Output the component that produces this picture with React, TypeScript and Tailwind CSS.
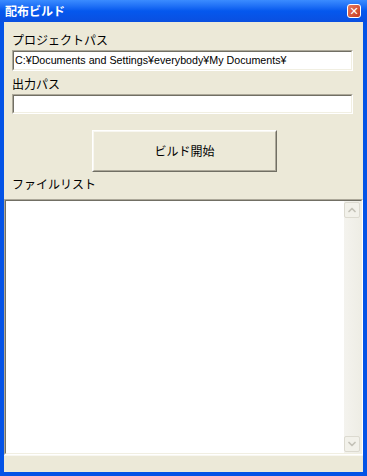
import { ChevronDown, ChevronUp } from 'lucide-react';

const jp = "font-['MS_UI_Gothic','Noto_Sans_CJK_JP',sans-serif]";

function Sunken({ children, className = '' }: { children?: React.ReactNode; className?: string }) {
  return (
    <div className={`border border-t-[#aca899] border-l-[#aca899] border-b-white border-r-white ${className}`}>
      <div className="h-full border border-t-[#716f64] border-l-[#716f64] border-b-[#f1efe2] border-r-[#f1efe2] bg-white">
        {children}
      </div>
    </div>
  );
}

function ScrollArrow({ down }: { down?: boolean }) {
  return (
    <div className="flex h-[16px] w-[16px] items-center justify-center rounded-[2px] border border-[#dcdad0] bg-[#f2f1ea]">
      {down ? (
        <ChevronDown className="h-3 w-3 text-[#c4c2b8]" strokeWidth={3.5} />
      ) : (
        <ChevronUp className="h-3 w-3 text-[#c4c2b8]" strokeWidth={3.5} />
      )}
    </div>
  );
}

export default function App() {
  return (
    <div className="flex h-[476px] w-[367px] flex-col bg-[#0453e6]">
      {/* title bar */}
      <div className="flex h-[22px] items-center justify-between bg-gradient-to-b from-[#3b8cff] via-[#0558ee] to-[#0a4fe0] pl-[5px] pr-[6px]">
        <span className={`${jp} text-[12px] font-bold leading-none text-white`}>配布ビルド</span>
        <div className="flex h-[14px] w-[14px] items-center justify-center rounded-[3px] border border-white bg-gradient-to-br from-[#e8795c] to-[#c4381f]">
          <span className="font-['DejaVu_Sans',sans-serif] text-[11px] font-bold leading-none text-white">✕</span>
        </div>
      </div>

      {/* client */}
      <div className="mb-[4px] ml-[4px] mr-[4px] flex flex-1 flex-col bg-[#ece9d8]">
        <div className="pl-[8px] pr-[10px] pt-[10px]">
          <div className={`${jp} h-[16px] text-[12px] leading-[16px] text-black`}>プロジェクトパス</div>
          <Sunken className="mt-[2px] h-[21px] w-[341px]">
            <div className="pl-[1px] font-['Liberation_Sans','Noto_Sans_CJK_JP',sans-serif] text-[10.7px] leading-[16px] text-black">
              C:¥Documents and Settings¥everybody¥My Documents¥
            </div>
          </Sunken>
          <div className={`${jp} mt-[5px] h-[16px] text-[12px] leading-[16px] text-black`}>出力パス</div>
          <Sunken className="mt-[2px] h-[20px] w-[341px]" />
        </div>

        <div className="ml-[88px] mt-[16px] h-[42px] w-[185px] border border-t-white border-l-white border-b-[#716f64] border-r-[#716f64]">
          <div className="flex h-full items-center justify-center border border-t-[#f8f7f1] border-l-[#f8f7f1] border-b-[#aca899] border-r-[#aca899] bg-[#ece9d8]">
            <span className={`${jp} text-[12px] leading-none text-black`}>ビルド開始</span>
          </div>
        </div>

        <div className={`${jp} ml-[8px] mt-[4px] h-[16px] text-[12px] leading-[16px] text-black`}>ファイルリスト</div>

        <Sunken className="mt-[7px] h-[256px]">
          <div className="flex h-full justify-end">
            <div className="flex w-[17px] flex-col justify-between bg-gradient-to-r from-[#f4f3ee] to-[#eeede5] py-[1px]">
              <ScrollArrow />
              <ScrollArrow down />
            </div>
          </div>
        </Sunken>

        <div className="flex-1 border-t border-t-[#f8f7f1] bg-[#ece9d8]" />
      </div>
    </div>
  );
}
